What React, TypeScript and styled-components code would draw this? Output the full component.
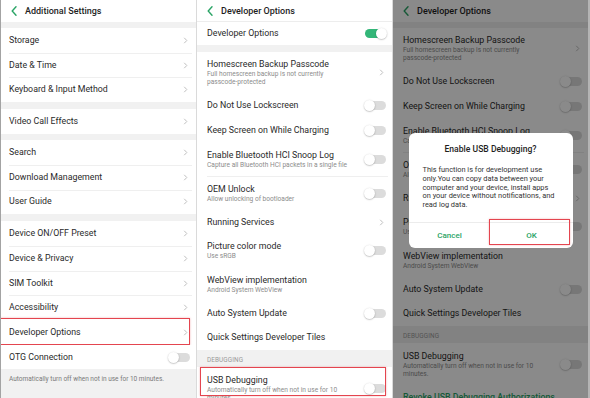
import React from 'react';
import styled, { createGlobalStyle } from 'styled-components';

const GlobalStyle = createGlobalStyle`
  html, body {
    margin: 0;
    padding: 0;
  }
  body {
    width: 590px;
    height: 398px;
    overflow: hidden;
    background: #fff;
    font-family: Roboto, 'Liberation Sans', Arial, sans-serif;
    color: #2a2a2a;
  }
`;

const Screen = styled.div`
  display: grid;
  grid-template-columns: 197px 196px 197px;
  height: 398px;
  overflow: hidden;
`;

const Header = styled.div<{ $line?: boolean }>`
  flex: none;
  height: 22px;
  box-sizing: border-box;
  display: flex;
  align-items: center;
  gap: 8px;
  padding-left: 10px;
  font-size: 9px;
  font-weight: 500;
  color: #1e1e1e;
  border-bottom: ${(p) => (p.$line ? '1px solid #ededed' : 'none')};
`;

const Gap = styled.div<{ $h: number }>`
  flex: none;
  height: ${(p) => p.$h}px;
  background: #f1f1f1;
`;

const Row = styled.div<{ $h: number; $mark?: string }>`
  position: relative;
  flex: none;
  height: ${(p) => p.$h}px;
  box-sizing: border-box;
  display: flex;
  align-items: center;
  padding: 0 6px 0 10px;
  background: #fff;

  & + &::before {
    content: '';
    position: absolute;
    top: 0;
    left: 10px;
    right: 4px;
    height: 1px;
    background: #efefef;
  }

  &::after {
    content: '';
    display: ${(p) => (p.$mark ? 'block' : 'none')};
    position: absolute;
    inset: ${(p) => p.$mark || '0'};
    border: 1.5px solid #e4454f;
    box-shadow: 0 0 2px rgba(228, 69, 79, 0.4);
  }
`;

const Footer = styled.div`
  flex: 1;
  background: #f1f1f1;
  padding: 6px 10px;
  font-size: 6.5px;
  line-height: 8px;
  color: #7a7a7a;
  white-space: nowrap;
`;

const Panel = styled.div<{ $left?: boolean; $right?: boolean }>`
  position: relative;
  display: flex;
  flex-direction: column;
  background: #fff;
  overflow: hidden;
  border-left: ${(p) => (p.$left ? '1px solid #a3a3a3' : 'none')};
  border-right: ${(p) => (p.$right ? '2px solid #b4b4b4' : '1px solid #dadada')};

  ${Row}, ${Footer} {
    padding-left: ${(p) => (p.$left ? '8px' : '10px')};
  }
  ${Row} + ${Row}::before {
    left: ${(p) => (p.$left ? '8px' : '10px')};
  }
`;

const Texts = styled.div`
  flex: 1;
  display: flex;
  flex-direction: column;
  min-width: 0;
`;

const Title = styled.div<{ $green?: boolean }>`
  font-size: 8.8px;
  line-height: 11px;
  white-space: nowrap;
  color: ${(p) => (p.$green ? '#2aa466' : '#2a2a2a')};
  font-weight: ${(p) => (p.$green ? 500 : 400)};
`;

const Sub = styled.div`
  font-size: 6.6px;
  line-height: 8px;
  color: #8c8c8c;
  white-space: nowrap;
`;

const Label = styled.div`
  flex: none;
  height: 17px;
  box-sizing: border-box;
  display: flex;
  align-items: flex-end;
  padding: 0 0 3px 10px;
  background: #f1f1f1;
  font-size: 6.4px;
  color: #9a9a9a;
  letter-spacing: 0.1px;
`;

const Track = styled.span<{ $on?: boolean }>`
  position: relative;
  flex: none;
  width: 21px;
  height: 9px;
  border-radius: 5px;
  background: ${(p) => (p.$on ? '#33b678' : '#dcdcdc')};

  &::after {
    content: '';
    position: absolute;
    top: -1px;
    left: ${(p) => (p.$on ? '11px' : '-1px')};
    width: 11px;
    height: 11px;
    border-radius: 50%;
    background: #fff;
    box-shadow: 0 0.5px 1.5px rgba(0, 0, 0, 0.35);
  }
`;

const Overlay = styled.div`
  position: absolute;
  inset: 0;
  background: rgba(0, 0, 0, 0.46);
  display: flex;
  align-items: center;
  justify-content: center;
  padding-bottom: 17px;
`;

const Dialog = styled.div`
  width: 164px;
  height: 115px;
  background: #fff;
  border-radius: 6px;
  display: flex;
  flex-direction: column;
`;

const DialogTitle = styled.div`
  padding-top: 11px;
  height: 22px;
  box-sizing: border-box;
  text-align: center;
  font-size: 8.6px;
  line-height: 10px;
  font-weight: 500;
  color: #1e1e1e;
`;

const DialogBody = styled.div`
  flex: 1;
  padding: 11px 0 0 14px;
  font-size: 7.4px;
  line-height: 8.8px;
  color: #333;
  white-space: nowrap;
`;

const Buttons = styled.div`
  flex: none;
  height: 25px;
  display: grid;
  grid-template-columns: 1fr 1fr;
  border-top: 1px solid #ececec;
`;

const DialogButton = styled.div<{ $mark?: boolean }>`
  position: relative;
  display: flex;
  align-items: center;
  justify-content: center;
  font-size: 8px;
  font-weight: 500;
  color: #2aa466;

  &::after {
    content: '';
    display: ${(p) => (p.$mark ? 'block' : 'none')};
    position: absolute;
    top: -4px;
    left: -2px;
    right: 3px;
    bottom: 3px;
    border: 1.5px solid #e4454f;
    box-shadow: 0 0 2px rgba(228, 69, 79, 0.4);
  }
`;

const Back = () => (
  <svg width="6" height="10" viewBox="0 0 6 10">
    <path d="M5 0.8 L1.2 5 L5 9.2" fill="none" stroke="#2aa466" strokeWidth="1.4" strokeLinecap="round" strokeLinejoin="round" />
  </svg>
);

const Chevron = () => (
  <svg width="5" height="7" viewBox="0 0 5 7" style={{ marginRight: 2 }}>
    <path d="M1.2 0.8 L3.8 3.5 L1.2 6.2" fill="none" stroke="#b8b8b8" strokeWidth="0.9" />
  </svg>
);

type Control = 'on' | 'off' | 'chevron' | 'none';

type Item =
  | { kind: 'row'; title: string; h: number; sub?: string[]; control?: Control; green?: boolean; mark?: string }
  | { kind: 'gap'; h: number }
  | { kind: 'label'; text: string };

const renderItems = (items: Item[]) =>
  items.map((it, i) => {
    if (it.kind === 'gap') return <Gap key={i} $h={it.h} />;
    if (it.kind === 'label') return <Label key={i}>{it.text}</Label>;
    return (
      <Row key={i} $h={it.h} $mark={it.mark}>
        <Texts>
          <Title $green={it.green}>{it.title}</Title>
          {it.sub?.map((s) => <Sub key={s}>{s}</Sub>)}
        </Texts>
        {it.control === 'chevron' && <Chevron />}
        {it.control === 'on' && <Track $on />}
        {it.control === 'off' && <Track />}
      </Row>
    );
  });

const nav = (title: string, h = 24.7): Item => ({ kind: 'row', title, h, control: 'chevron' });

const leftItems: Item[] = [
  { kind: 'gap', h: 6 },
  nav('Storage'),
  nav('Date & Time'),
  nav('Keyboard & Input Method'),
  { kind: 'gap', h: 7 },
  nav('Video Call Effects'),
  { kind: 'gap', h: 6.5 },
  nav('Search'),
  nav('Download Management'),
  nav('User Guide'),
  { kind: 'gap', h: 7 },
  nav('Device ON/OFF Preset'),
  nav('Device & Privacy'),
  nav('SIM Toolkit'),
  nav('Accessibility'),
  { kind: 'row', title: 'Developer Options', h: 24.7, control: 'chevron', mark: '-2px 6px 0 -1px' },
  { kind: 'row', title: 'OTG Connection', h: 24.7, control: 'off' },
];

const devItems = (mark: boolean): Item[] => [
  {
    kind: 'row',
    title: 'Homescreen Backup Passcode',
    h: 40,
    sub: ['Full homescreen backup is not currently', 'passcode-protected'],
    control: 'chevron',
  },
  { kind: 'row', title: 'Do Not Use Lockscreen', h: 26, control: 'off' },
  { kind: 'row', title: 'Keep Screen on While Charging', h: 24, control: 'off' },
  {
    kind: 'row',
    title: 'Enable Bluetooth HCI Snoop Log',
    h: 34,
    sub: ['Capture all Bluetooth HCI packets in a single file'],
    control: 'off',
  },
  { kind: 'row', title: 'OEM Unlock', h: 34, sub: ['Allow unlocking of bootloader'], control: 'off' },
  { kind: 'row', title: 'Running Services', h: 24, control: 'chevron' },
  { kind: 'row', title: 'Picture color mode', h: 33, sub: ['Use sRGB'], control: 'off' },
  { kind: 'row', title: 'WebView implementation', h: 35, sub: ['Android System WebView'] },
  { kind: 'row', title: 'Auto System Update', h: 23, control: 'off' },
  { kind: 'row', title: 'Quick Settings Developer Tiles', h: 25 },
  { kind: 'label', text: 'DEBUGGING' },
  {
    kind: 'row',
    title: 'USB Debugging',
    h: 42,
    sub: ['Automatically turn off when not in use for 10', 'minutes.'],
    control: 'off',
    mark: mark ? '0 6px 13px 3px' : undefined,
  },
  { kind: 'row', title: 'Revoke USB Debugging Authorizations', h: 24, green: true },
];

const App = () => (
  <>
    <GlobalStyle />
    <Screen>
      <Panel $left>
        <Header>
          <Back />
          Additional Settings
        </Header>
        {renderItems(leftItems)}
        <Footer>Automatically turn off when not in use for 10 minutes.</Footer>
      </Panel>

      <Panel>
        <Header $line>
          <Back />
          Developer Options
        </Header>
        {renderItems([
          { kind: 'row', title: 'Developer Options', h: 23, control: 'on' },
          { kind: 'gap', h: 7 },
          ...devItems(true),
        ])}
      </Panel>

      <Panel $right>
        <Header>
          <Back />
          Developer Options
        </Header>
        {renderItems([{ kind: 'gap', h: 6 }, ...devItems(false)])}
        <Overlay>
          <Dialog>
            <DialogTitle>Enable USB Debugging?</DialogTitle>
            <DialogBody>
              This function is for development use
              <br />
              only.You can copy data between your
              <br />
              computer and your device, install apps
              <br />
              on your device without notifications, and
              <br />
              read log data.
            </DialogBody>
            <Buttons>
              <DialogButton>Cancel</DialogButton>
              <DialogButton $mark>OK</DialogButton>
            </Buttons>
          </Dialog>
        </Overlay>
      </Panel>
    </Screen>
  </>
);

export default App;
